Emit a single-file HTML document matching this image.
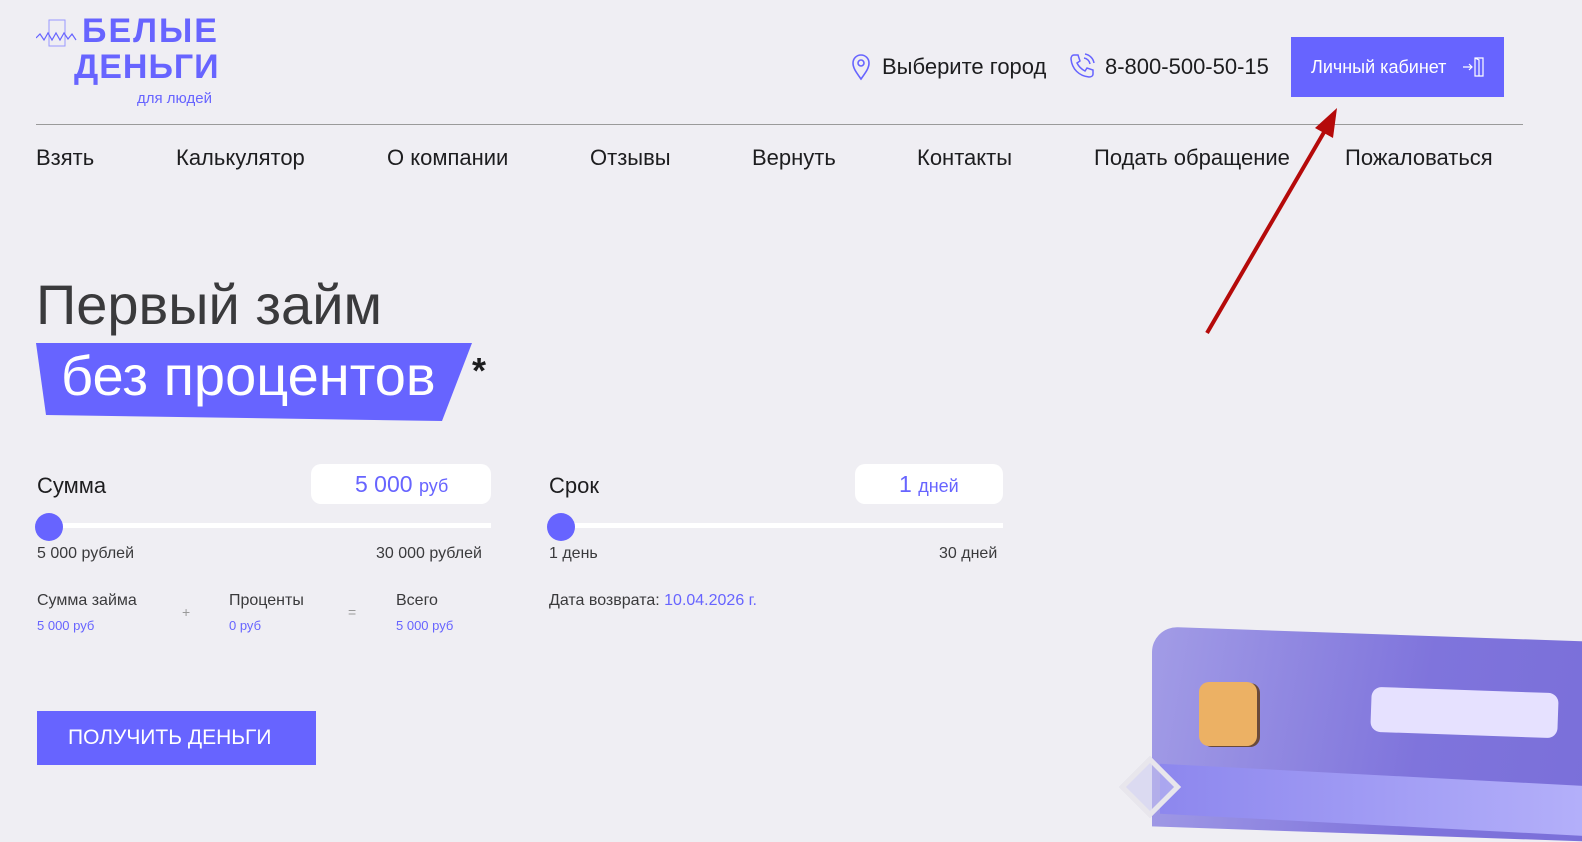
<!DOCTYPE html>
<html><head><meta charset="utf-8"><style>
*{margin:0;padding:0;box-sizing:border-box}
body{width:1582px;height:814px;overflow:hidden;background:#efeef3;font-family:"Liberation Sans",sans-serif;color:#1d1d1f;position:relative}
.a{position:absolute;white-space:nowrap}
.acc{color:#6764ff}
</style></head><body>
<!-- logo -->
<svg class="a" style="left:36px;top:18px" width="42" height="30" viewBox="0 0 42 30"><rect x="13" y="2" width="16" height="26" fill="none" stroke="#9a98ff" stroke-width="1"/><polyline points="0,20 4,16 8,22 12,15 16,22 20,15 24,22 28,15 32,21 36,16 40,22" fill="none" stroke="#6764ff" stroke-width="1.2"/></svg>
<div class="a" style="left:82px;top:14px;font-size:34px;font-weight:bold;color:#6764ff;letter-spacing:2px;line-height:34px">БЕЛЫЕ</div>
<div class="a" style="left:74px;top:50px;font-size:34px;font-weight:bold;color:#6764ff;letter-spacing:1px;line-height:34px">ДЕНЬГИ</div>
<div class="a" style="left:137px;top:90px;font-size:15px;color:#6764ff">для людей</div>
<!-- header right -->
<svg class="a" style="left:850px;top:53px" width="22" height="28" viewBox="0 0 22 28"><path d="M11 26C6 19 3 15 3 10a8 8 0 0 1 16 0c0 5-3 9-8 16z" fill="none" stroke="#6764ff" stroke-width="1.6"/><circle cx="11" cy="10" r="3" fill="none" stroke="#6764ff" stroke-width="1.6"/></svg>
<div class="a" style="left:882px;top:54px;font-size:22px">Выберите город</div>
<svg class="a" style="left:1068px;top:52px" width="28" height="28" viewBox="0 0 28 28"><path d="M6 3l4 0 2 6-3 2c2 4 4 6 8 8l2-3 6 2v4c0 2-2 3-4 3C11 24 4 17 3 7c0-2 1-4 3-4z" fill="none" stroke="#6764ff" stroke-width="1.5"/><path d="M16 6a7 7 0 0 1 6 6M17 2a11 11 0 0 1 9 9" fill="none" stroke="#6764ff" stroke-width="1.5"/></svg>
<div class="a" style="left:1105px;top:54px;font-size:22px">8-800-500-50-15</div>
<div class="a" style="left:1291px;top:37px;width:213px;height:60px;background:#6764ff"></div>
<div class="a" style="left:1311px;top:57px;font-size:18px;color:#fff">Личный кабинет</div>
<svg class="a" style="left:1463px;top:56px" width="24" height="22" viewBox="0 0 24 22"><path d="M0 11h9M6 8l3 3-3 3" fill="none" stroke="#fff" stroke-width="1.2"/><path d="M12 2h8v18h-8zM12 2l4 2v16" fill="none" stroke="#fff" stroke-width="1.2"/></svg>
<div class="a" style="left:36px;top:124px;width:1487px;height:1px;background:#9a9a9a"></div>
<!-- nav -->
<div class="a" style="left:36px;top:145px;font-size:22px">Взять</div>
<div class="a" style="left:176px;top:145px;font-size:22px">Калькулятор</div>
<div class="a" style="left:387px;top:145px;font-size:22px">О компании</div>
<div class="a" style="left:590px;top:145px;font-size:22px">Отзывы</div>
<div class="a" style="left:752px;top:145px;font-size:22px">Вернуть</div>
<div class="a" style="left:917px;top:145px;font-size:22px">Контакты</div>
<div class="a" style="left:1094px;top:145px;font-size:22px">Подать обращение</div>
<div class="a" style="left:1345px;top:145px;font-size:22px">Пожаловаться</div>
<!-- arrow -->
<svg class="a" style="left:1195px;top:100px" width="150" height="240" viewBox="0 0 150 240"><line x1="12" y1="233" x2="135" y2="22" stroke="#b50a0a" stroke-width="4"/><polygon points="142,8 138,38 120,28" fill="#b50a0a"/></svg>
<!-- hero -->
<div class="a" style="left:36px;top:272px;font-size:56px;color:#3a3a3c">Первый займ</div>
<svg class="a" style="left:36px;top:343px" width="436" height="78"><polygon points="0,0 436,0 406,78 10,72" fill="#6764ff"/></svg>
<div class="a" style="left:61px;top:343px;font-size:56px;color:#fff">без процентов</div>
<div class="a" style="left:472px;top:350px;font-size:36px;font-weight:bold">*</div>
<!-- calc -->
<div class="a" style="left:37px;top:473px;font-size:22px">Сумма</div>
<div class="a" style="left:311px;top:464px;width:180px;height:40px;background:#fff;border-radius:10px"></div>
<div class="a acc" style="left:355px;top:471px;font-size:23px">5 000 <span style="font-size:18px">руб</span></div>
<div class="a" style="left:37px;top:523px;width:454px;height:5px;background:#fff"></div>
<div class="a" style="left:35px;top:513px;width:28px;height:28px;border-radius:50%;background:#6764ff"></div>
<div class="a" style="left:37px;top:545px;font-size:16px;color:#3a3a3c">5 000 рублей</div>
<div class="a" style="left:376px;top:545px;font-size:16px;color:#3a3a3c">30 000 рублей</div>
<div class="a" style="left:37px;top:592px;font-size:16px;color:#3a3a3c">Сумма займа</div>
<div class="a acc" style="left:37px;top:618px;font-size:13px">5 000 руб</div>
<div class="a" style="left:182px;top:604px;font-size:14px;color:#999">+</div>
<div class="a" style="left:229px;top:592px;font-size:16px;color:#3a3a3c">Проценты</div>
<div class="a acc" style="left:229px;top:618px;font-size:13px">0 руб</div>
<div class="a" style="left:348px;top:604px;font-size:14px;color:#999">=</div>
<div class="a" style="left:396px;top:592px;font-size:16px;color:#3a3a3c">Всего</div>
<div class="a acc" style="left:396px;top:618px;font-size:13px">5 000 руб</div>
<div class="a" style="left:549px;top:473px;font-size:22px">Срок</div>
<div class="a" style="left:855px;top:464px;width:148px;height:40px;background:#fff;border-radius:10px"></div>
<div class="a acc" style="left:899px;top:471px;font-size:23px">1 <span style="font-size:18px">дней</span></div>
<div class="a" style="left:549px;top:523px;width:454px;height:5px;background:#fff"></div>
<div class="a" style="left:547px;top:513px;width:28px;height:28px;border-radius:50%;background:#6764ff"></div>
<div class="a" style="left:549px;top:545px;font-size:16px;color:#3a3a3c">1 день</div>
<div class="a" style="left:939px;top:545px;font-size:16px;color:#3a3a3c">30 дней</div>
<div class="a" style="left:549px;top:592px;font-size:16px;color:#3a3a3c">Дата возврата: <span class="acc">10.04.2026 г.</span></div>
<div class="a" style="left:37px;top:711px;width:279px;height:54px;background:#6764ff"></div>
<div class="a" style="left:68px;top:726px;font-size:21px;color:#fff">ПОЛУЧИТЬ ДЕНЬГИ</div>
<!-- card -->
<div class="a" style="left:1152px;top:634px;width:440px;height:200px;border-radius:26px 0 0 0;background:linear-gradient(100deg,#a29ce6,#7f74dc 60%,#7a6fd9);transform:skewY(2deg)"></div>
<div class="a" style="left:1160px;top:775px;width:430px;height:50px;background:linear-gradient(90deg,#8d87ee,#b4b0fa);transform:skewY(3deg)"></div>
<div class="a" style="left:1199px;top:682px;width:58px;height:64px;border-radius:10px;background:#ecb164;box-shadow:3px 1px 0 #6a4a3a"></div>
<div class="a" style="left:1371px;top:690px;width:187px;height:45px;border-radius:10px;background:#e6e1ff;transform:rotate(2deg)"></div>
<div class="a" style="left:1128px;top:765px;width:44px;height:44px;transform:rotate(45deg);border:5px solid #e8e6ec;background:rgba(200,198,240,.5)"></div>
</body></html>
